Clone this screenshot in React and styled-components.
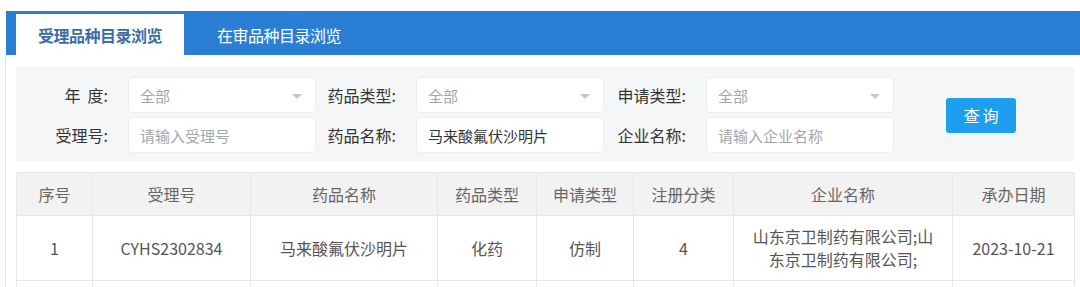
import React from "react";
import styled, { createGlobalStyle } from "styled-components";

const GlobalStyle = createGlobalStyle`
  html, body {
    margin: 0;
    padding: 0;
    background: #fff;
    overflow: hidden;
  }
  body {
    font-family: "Noto Sans CJK SC", "Noto Sans", sans-serif;
    color: #333;
  }
`;

const Page = styled.div`
  padding: 11px 0 0 5px;
  width: 1100px;
`;

const TabBar = styled.div`
  display: flex;
  align-items: flex-end;
  gap: 11px;
  height: 44px;
  margin-left: 1px;
  padding-left: 10px;
  background: #2a7fd4;
`;

const Tab = styled.div`
  height: 41px;
  padding: 0 22px;
  display: flex;
  align-items: center;
  font-size: 16px;
  font-weight: ${(p) => (p.$active ? 700 : 400)};
  color: ${(p) => (p.$active ? "#3d6da6" : "#fff")};
  background: ${(p) => (p.$active ? "#fff" : "transparent")};
  letter-spacing: -0.5px;
`;

const Panel = styled.div`
  border-left: 1px solid #e6e6e6;
  padding: 12px 0 0 10px;
`;

const Filter = styled.div`
  width: 1046px;
  padding: 10px 0 8px 12px;
  background: #f5f6f8;
  display: grid;
  grid-template-columns: 100px 188px 100px 188px 102px 188px 1fr;
  grid-template-rows: 36px 36px;
  row-gap: 4px;
  align-items: center;
`;

const Label = styled.label`
  text-align: right;
  padding-right: 20px;
  font-size: 16px;
  color: #333;
  white-space: pre;
`;

const Field = styled.div`
  position: relative;
  height: 36px;
  box-sizing: border-box;
  background: #fff;
  border: 1px solid #eceef2;
  border-radius: 4px;
  display: flex;
  align-items: center;
  padding-left: 11px;
  font-size: 15px;
  color: ${(p) => (p.$muted ? "#a3a6ab" : "#333")};
`;

const Caret = styled.span`
  position: absolute;
  right: 13px;
  top: 16px;
  width: 0;
  height: 0;
  border-left: 5px solid transparent;
  border-right: 5px solid transparent;
  border-top: 5px solid #c4c6ca;
`;

const ButtonCell = styled.div`
  grid-column: 7;
  grid-row: 1 / span 2;
  display: flex;
  align-items: center;
  padding-left: 52px;
`;

const QueryButton = styled.button`
  width: 70px;
  height: 35px;
  border: none;
  border-radius: 3px;
  background: #1e9ef0;
  color: #fff;
  font-family: inherit;
  font-size: 16px;
  letter-spacing: 3px;
  padding: 0 0 0 3px;
`;

const Table = styled.table`
  margin-top: 11px;
  width: 1058px;
  table-layout: fixed;
  border-collapse: collapse;
  font-size: 16px;
`;

const Th = styled.th`
  height: 42px;
  background: #f2f2f2;
  border: 1px solid #e6e6e6;
  color: #666;
  font-weight: 400;
  text-align: center;
  padding: 0;
`;

const Td = styled.td`
  height: 64px;
  border: 1px solid #e6e6e6;
  color: #555;
  text-align: center;
  line-height: 23px;
  padding: 0 ${(p) => p.$pad || 4}px;
`;

const columns = [
  { title: "序号", width: 76 },
  { title: "受理号", width: 158 },
  { title: "药品名称", width: 187 },
  { title: "药品类型", width: 99 },
  { title: "申请类型", width: 97 },
  { title: "注册分类", width: 100 },
  { title: "企业名称", width: 219 },
  { title: "承办日期", width: 122 },
];

const rows = [
  [
    "1",
    "CYHS2302834",
    "马来酸氟伏沙明片",
    "化药",
    "仿制",
    "4",
    "山东京卫制药有限公司;山东京卫制药有限公司;",
    "2023-10-21",
  ],
  ["", "", "", "", "", "", "", ""],
];

const SelectBox = ({ value }) => (
  <Field $muted>
    {value}
    <Caret />
  </Field>
);

export default function App() {
  return (
    <Page>
      <GlobalStyle />
      <TabBar>
        <Tab $active>受理品种目录浏览</Tab>
        <Tab>在审品种目录浏览</Tab>
      </TabBar>
      <Panel>
        <Filter>
          <Label>{"年  度:"}</Label>
          <SelectBox value="全部" />
          <Label>药品类型:</Label>
          <SelectBox value="全部" />
          <Label>申请类型:</Label>
          <SelectBox value="全部" />
          <ButtonCell>
            <QueryButton>查询</QueryButton>
          </ButtonCell>
          <Label>受理号:</Label>
          <Field $muted>请输入受理号</Field>
          <Label>药品名称:</Label>
          <Field>马来酸氟伏沙明片</Field>
          <Label>企业名称:</Label>
          <Field $muted>请输入企业名称</Field>
        </Filter>
        <Table>
          <colgroup>
            {columns.map((c) => (
              <col key={c.title} style={{ width: c.width }} />
            ))}
          </colgroup>
          <thead>
            <tr>
              {columns.map((c) => (
                <Th key={c.title}>{c.title}</Th>
              ))}
            </tr>
          </thead>
          <tbody>
            {rows.map((r, i) => (
              <tr key={i}>
                {r.map((cell, j) => (
                  <Td key={j} $pad={j === 6 ? 15 : 4}>
                    {cell}
                  </Td>
                ))}
              </tr>
            ))}
          </tbody>
        </Table>
      </Panel>
    </Page>
  );
}
